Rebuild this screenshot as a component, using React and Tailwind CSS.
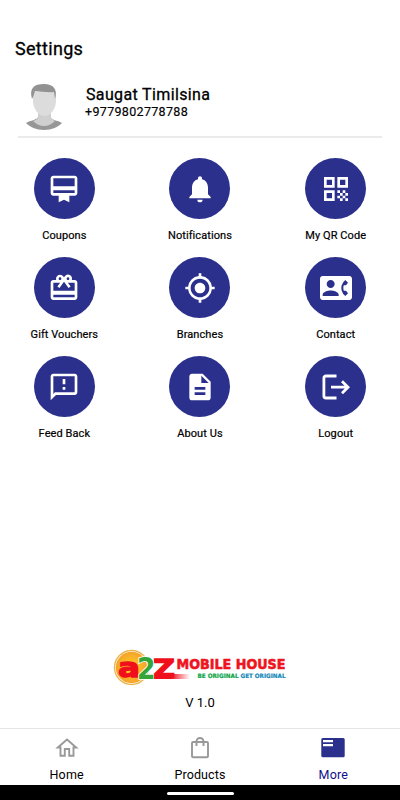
import React from "react";
import {
  MdOutlineCardMembership,
  MdNotifications,
  MdQrCode,
  MdOutlineCardGiftcard,
  MdGpsFixed,
  MdContactPhone,
  MdOutlineSmsFailed,
  MdDescription,
} from "react-icons/md";

function LogoutIcon({ size }) {
  return (
    <svg width={size} height={size} viewBox="0 0 32 32" fill="none" stroke="currentColor" strokeWidth="2.8">
      <path d="M16.500 5H5.900a2 2 0 0 0-2 2v18a2 2 0 0 0 2 2h10.600" />
      <path d="M11 16.200h17M22 10.200l6 6-6 6" />
    </svg>
  );
}

const items = [
  { label: "Coupons", Icon: MdOutlineCardMembership },
  { label: "Notifications", Icon: MdNotifications },
  { label: "My QR Code", Icon: MdQrCode },
  { label: "Gift Vouchers", Icon: MdOutlineCardGiftcard },
  { label: "Branches", Icon: MdGpsFixed },
  { label: "Contact", Icon: MdContactPhone },
  { label: "Feed Back", Icon: MdOutlineSmsFailed },
  { label: "About Us", Icon: MdDescription },
  { label: "Logout", Icon: LogoutIcon },
];

function Avatar() {
  return (
    <svg className="ml-[25px] mt-[2px] shrink-0" width="38" height="48" viewBox="0 0 38 48">
      <path d="M1 41C6 38 11 39 14 34h10c3 5 8 4 13 7-4 4-10 7-18 7S5 45 1 41z" fill="#979797" />
      <path d="M13 27h13v7c0 3 2 4 4 5-3 3-7 5-11 5s-8-2-11-5c3-1 5-2 5-5z" fill="#cfcfcf" />
      <path d="M8 9h23v10c0 7-5 15-11.500 15S8 26 8 19z" fill="#dcdcdc" />
      <path d="M7 17C4 6 9 2 19 2c9 0 14 5 11 15l-1-7c-6 1-14-1-19-1-1 2-1 5-3 8z" fill="#929292" />
    </svg>
  );
}

function Logo() {
  return (
    <svg className="overflow-visible" width="176" height="40" viewBox="0 0 176 40">
      <defs>
        <radialGradient id="sun">
          <stop offset="0" stopColor="#ffd21c" />
          <stop offset="1" stopColor="#f5a32c" />
        </radialGradient>
        <linearGradient id="tail">
          <stop offset="0.5" stopColor="#f0101c" />
          <stop offset="1" stopColor="#f0101c" stopOpacity="0" />
        </linearGradient>
      </defs>
      <circle cx="19.500" cy="19.500" r="17" fill="#fff" stroke="#e9b750" strokeWidth="1.400" />
      <circle cx="19.500" cy="19.500" r="15.700" fill="url(#sun)" />
      <rect x="40" y="26" width="38" height="5" fill="url(#tail)" />
      {/* the green 2 lies over both red letters */}
      <g fontFamily="DejaVu Sans" fontWeight="700" fill="#f0101c" stroke="#f0101c" strokeWidth="1.300">
        <text x="6" y="29" fontSize="27" textLength="22" lengthAdjust="spacingAndGlyphs">a</text>
        <text x="41" y="28.500" fontSize="25" textLength="22" lengthAdjust="spacingAndGlyphs">Z</text>
        <text
          x="25" y="31" fontSize="31" textLength="18.500" lengthAdjust="spacingAndGlyphs"
          fill="#35a536" stroke="#fff" strokeWidth="1.600" paintOrder="stroke"
        >
          2
        </text>
      </g>
      <text
        x="64.500" y="21" fontFamily="DejaVu Sans" fontWeight="700" fontSize="14.500"
        textLength="109" lengthAdjust="spacingAndGlyphs" fill="#ee1520" stroke="#ee1520" strokeWidth="0.600"
      >
        MOBILE HOUSE
      </text>
      <g fontFamily="DejaVu Sans" fontWeight="700" fontSize="6" strokeWidth="0.200">
        <text x="85.500" y="29.500" textLength="41" lengthAdjust="spacingAndGlyphs" fill="#0aa648" stroke="#0aa648">BE ORIGINAL</text>
        <text x="128.500" y="29.500" textLength="45" lengthAdjust="spacingAndGlyphs" fill="#1588b8" stroke="#1588b8">GET ORIGINAL</text>
      </g>
    </svg>
  );
}

export default function App() {
  return (
    <div className="w-[400px] h-[800px] bg-white text-black flex flex-col overflow-hidden font-['Roboto',sans-serif]">
      {/* Title */}
      <h1 className="mt-[37px] ml-[15px] text-[18px] leading-6 tracking-[0.3px] [-webkit-text-stroke:0.3px_black]">Settings</h1>

      {/* Profile */}
      <div className="mt-[19px] h-14 flex">
        <Avatar />
        <div className="ml-[22px] mt-[5px]">
          <p className="text-[16px] leading-[19px] tracking-[0.36px] [-webkit-text-stroke:0.3px_black] ml-px">Saugat Timilsina</p>
          <p className="text-[12.5px] leading-4 tracking-[0.33px] [-webkit-text-stroke:0.15px_black]">+9779802778788</p>
        </div>
      </div>
      <div className="ml-[18px] mr-[18px] h-[2px] bg-[#ebebeb]" />

      {/* Menu */}
      <div className="-mx-[3.5px] mt-5 grid grid-cols-3">
        {items.map(({ label, Icon }) => (
          <div key={label} className="h-[99px] flex flex-col items-center">
            <div className="w-[61px] h-[61px] rounded-full bg-[#2a308c] text-white flex items-center justify-center">
              <Icon size={32} />
            </div>
            <span className="mt-[9px] text-[11px] leading-4 tracking-[0.08px] [-webkit-text-stroke:0.2px_black]">{label}</span>
          </div>
        ))}
      </div>

      {/* Logo and version */}
      <div className="mt-auto flex flex-col items-center">
        <Logo />
        <p className="mt-[7px] text-[13px] leading-4">V 1.0</p>
      </div>

      {/* Bottom tabs */}
      <nav className="mt-[17px] h-[57px] shrink-0 border-t border-[#e5e5e5] grid grid-cols-3 text-[12.5px] leading-4">
        <div className="flex flex-col items-center pt-[7px]">
          <svg width="24" height="24" viewBox="0 0 24 24" fill="none" stroke="#999" strokeWidth="1.900">
            <path d="M2.800 11.500L12 3.500l9.200 8H18.500v8.200h-4.300V13H9.800v6.700H5.500v-8.200z" />
          </svg>
          <span className="mt-[7px] tracking-[0.2px]">Home</span>
        </div>
        <div className="flex flex-col items-center pt-[7px]">
          <svg width="24" height="24" viewBox="0 0 24 24" fill="none" stroke="#999" strokeWidth="1.900">
            <rect x="4" y="6" width="16" height="15.300" rx="1" />
            <path d="M8.500 10V5.500a3.500 3.500 0 0 1 7 0V10" />
          </svg>
          <span className="mt-[7px] tracking-[0.1px]">Products</span>
        </div>
        <div className="flex flex-col items-center pt-[7px] text-[#10108a]">
          <svg width="24" height="24" viewBox="0 0 24 24">
            <rect x="0.300" y="2" width="23.400" height="19.300" rx="1.500" fill="#2a308c" />
            <path d="M2 4h10v2.300H2zM2 8h10v2.300H2z" fill="#fff" />
          </svg>
          <span className="mt-[7px] tracking-[0.2px]">More</span>
        </div>
      </nav>

      {/* System bar */}
      <div className="h-[15px] shrink-0 bg-black flex justify-center pt-[7px]">
        <div className="w-[67px] h-[2.5px] rounded-full bg-white" />
      </div>
    </div>
  );
}
